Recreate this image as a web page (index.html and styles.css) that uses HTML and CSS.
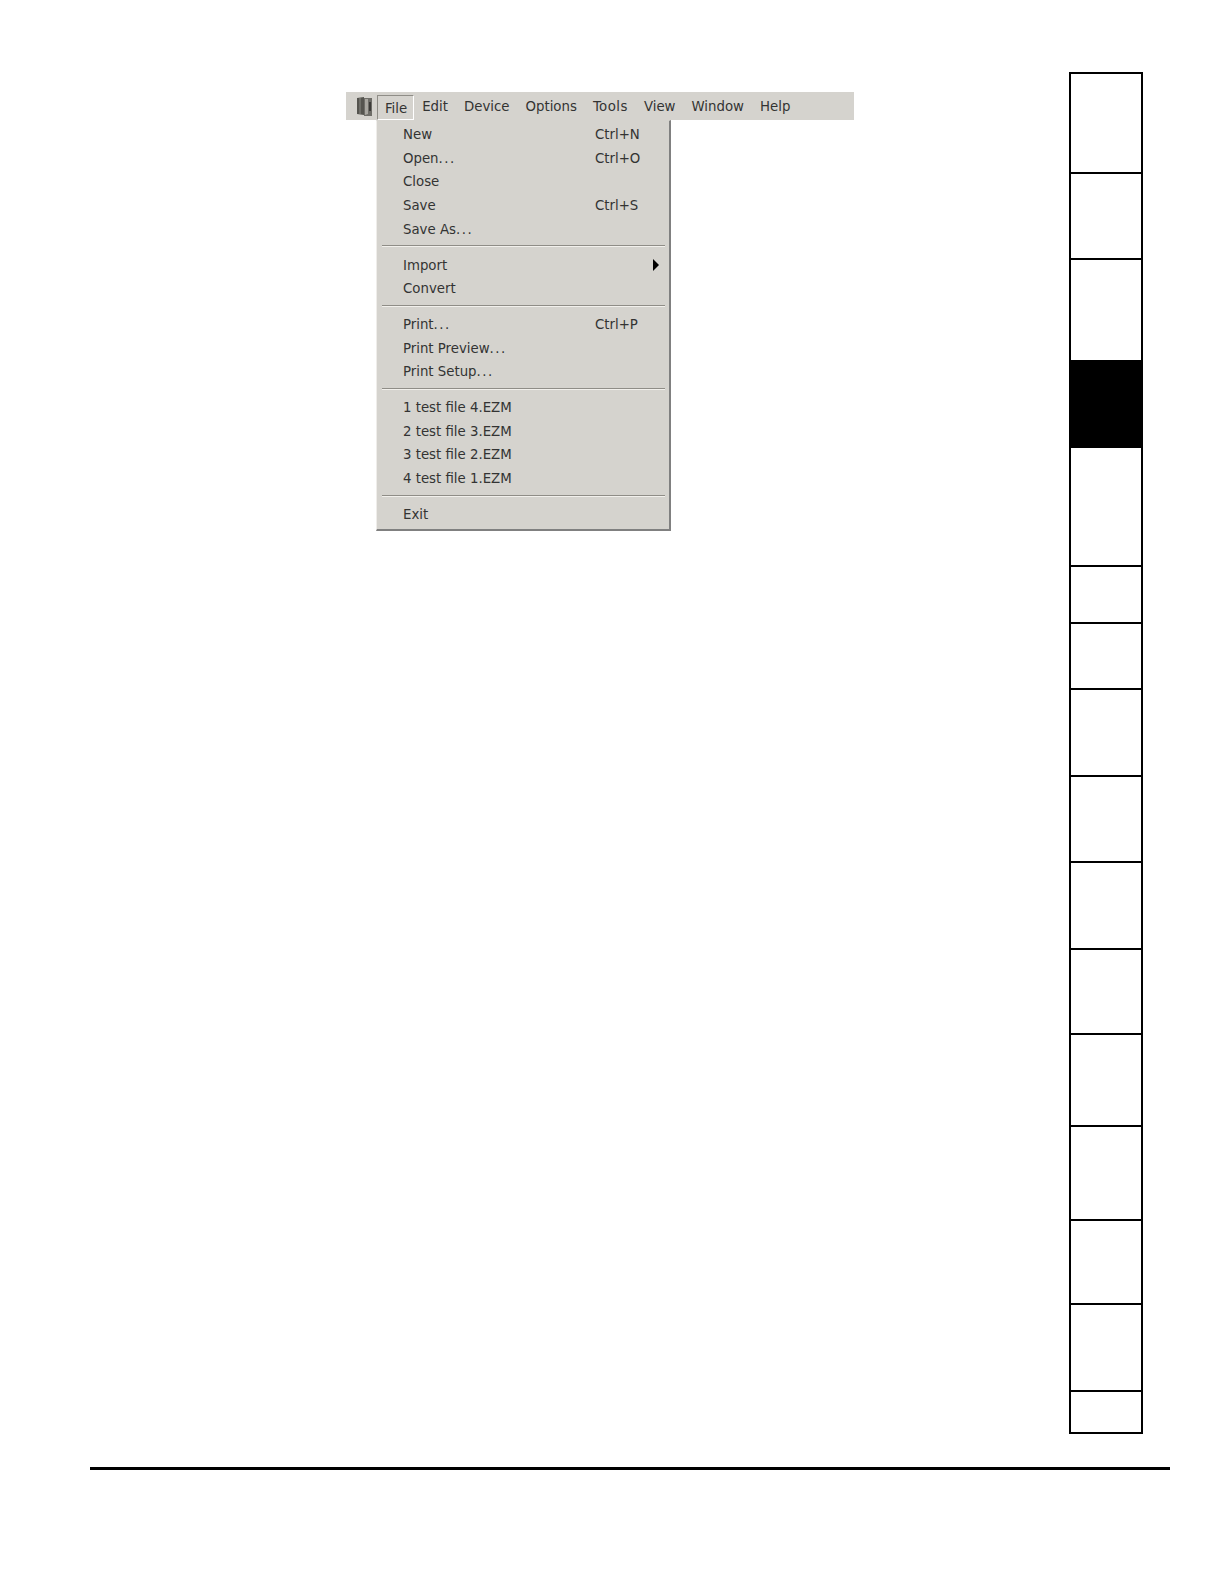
FILE: index.html
```html
<!DOCTYPE html>
<html lang="en">
<head>
    <meta charset="UTF-8">
    <title>File menu</title>
    <link rel="stylesheet" href="styles.css">
</head>
<body>
    <div class="page">
        <div class="content">
            <div class="menubar">
                <svg class="app-icon" width="15" height="19" viewBox="0 0 15 19">
                    <path d="M0 1 L7 0 L7 18 L0 17 Z" fill="#55544f"/>
                    <path d="M7 1 L15 1 L15 19 L7 19 Z" fill="#6e6d68"/>
                    <path d="M8 2 L11 2 L11 17 L8 18 Z" fill="#a8a6a0"/>
                    <path d="M3 1 L3 17" stroke="#8a8984" stroke-width="1"/>
                    <path d="M12 5 L14 5 L14 14 L12 14 Z" fill="#3c3b38"/>
                </svg>
                <div class="menu-title open">File</div>
                <div class="menu-title">Edit</div>
                <div class="menu-title">Device</div>
                <div class="menu-title">Options</div>
                <div class="menu-title spaced">Tools</div>
                <div class="menu-title">View</div>
                <div class="menu-title">Window</div>
                <div class="menu-title">Help</div>
            </div>
            <div class="dropdown">
                <div class="item"><span>New</span><span class="shortcut">Ctrl+N</span></div>
                <div class="item"><span>Open<span class="dots">...</span></span><span class="shortcut">Ctrl+O</span></div>
                <div class="item"><span>Close</span></div>
                <div class="item"><span>Save</span><span class="shortcut">Ctrl+S</span></div>
                <div class="item"><span>Save As<span class="dots">...</span></span></div>
                <div class="separator"></div>
                <div class="item"><span>Import</span><span class="arrow"></span></div>
                <div class="item"><span>Convert</span></div>
                <div class="separator"></div>
                <div class="item"><span>Print<span class="dots">...</span></span><span class="shortcut">Ctrl+P</span></div>
                <div class="item"><span>Print Preview<span class="dots">...</span></span></div>
                <div class="item"><span>Print Setup<span class="dots">...</span></span></div>
                <div class="separator"></div>
                <div class="item"><span>1 test file 4.EZM</span></div>
                <div class="item"><span>2 test file 3.EZM</span></div>
                <div class="item"><span>3 test file 2.EZM</span></div>
                <div class="item"><span>4 test file 1.EZM</span></div>
                <div class="separator"></div>
                <div class="item"><span>Exit</span></div>
            </div>
        </div>

        <!-- Chapter tabs -->
        <div class="tabs">
            <div class="tab"></div>
            <div class="tab"></div>
            <div class="tab"></div>
            <div class="tab current"></div>
            <div class="tab"></div>
            <div class="tab"></div>
            <div class="tab"></div>
            <div class="tab"></div>
            <div class="tab"></div>
            <div class="tab"></div>
            <div class="tab"></div>
            <div class="tab"></div>
            <div class="tab"></div>
            <div class="tab"></div>
            <div class="tab"></div>
            <div class="tab"></div>
        </div>
    </div>
    <div class="footer-rule"></div>
</body>
</html>
```

FILE: styles.css
```css
body {
    margin: 0;
    background-color: #fff;
    font-family: "DejaVu Sans Condensed", "DejaVu Sans", sans-serif;
    font-size: 14.8px;
    color: #333;
}
.page {
    display: flex;
    justify-content: space-between;
    padding: 72px 81px 0 346px;
}
.content {
    padding-top: 20px;
}
.menubar {
    display: flex;
    align-items: center;
    width: 508px;
    height: 28px;
    box-sizing: border-box;
    padding-left: 11px;
    background-color: #d5d3ce;
}
.app-icon {
    flex: none;
    margin-right: 5px;
}
.menu-title {
    padding: 0 8px;
    line-height: 26px;
    white-space: nowrap;
}
.menu-title.spaced {
    letter-spacing: 0.5px;
}
.menu-title.open {
    height: 25px;
    margin-top: 3px;
    box-sizing: border-box;
    line-height: 24px;
    padding: 0 6px 0 7px;
    border: 1px solid #fff;
    border-top-color: #8f8d87;
    border-left-color: #8f8d87;
}
.dropdown {
    width: 295px;
    margin-left: 30px;
    box-sizing: border-box;
    padding: 1.2px 3px 3px 3px;
    background-color: #d5d3ce;
    border: 1px solid #808080;
    border-top-color: #d5d3ce;
    border-left-color: #efedea;
    border-right-width: 2px;
    border-bottom-width: 2px;
}
.item {
    display: flex;
    position: relative;
    height: 23.6px;
    line-height: 23.6px;
    padding-left: 23px;
}
.dots {
    letter-spacing: 1.5px;
}
.shortcut {
    position: absolute;
    left: 215px;
}
.arrow {
    position: absolute;
    left: 273px;
    top: 6px;
    border-left: 6px solid #000;
    border-top: 6px solid transparent;
    border-bottom: 6px solid transparent;
}
.separator {
    height: 2px;
    margin: 5px 1px 5.4px 2px;
    background-color: #8f8d87;
    border-bottom: 1px solid #f2f0ec;
    box-sizing: border-box;
}
.tabs {
    display: grid;
    grid-template-rows: 100px 86px 102px 86px 119px 57px 66px 87px 86px 87px 85px 92px 94px 84px 87px 40px;
    width: 74px;
    box-sizing: border-box;
    border: 2px solid #000;
}
.tab {
    border-bottom: 2px solid #000;
}
.tab:last-child {
    border-bottom: none;
}
.tab.current {
    background-color: #000;
}
.footer-rule {
    height: 3px;
    margin: 33px 54px 0 90px;
    background-color: #000;
}
```
